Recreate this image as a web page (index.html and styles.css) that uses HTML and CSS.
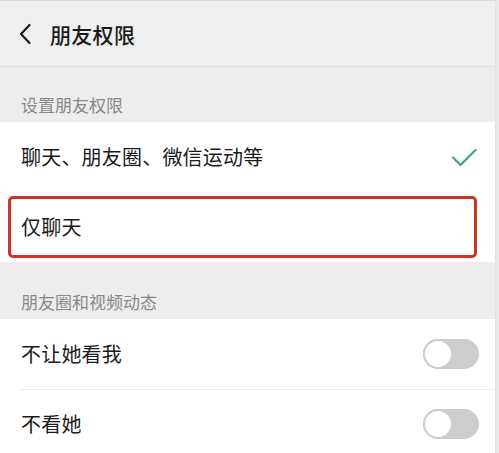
FILE: index.html
```html
<!DOCTYPE html>
<html lang="zh-CN">
<head>
<meta charset="utf-8">
<title>朋友权限</title>
<link rel="stylesheet" href="styles.css">
</head>
<body>
<div class="page">
  <header class="topbar">
    <svg class="back" width="14" height="22" viewBox="0 0 14 22"><path d="M11.5 2 L3 11 L11.5 20" fill="none" stroke="#1a1a1a" stroke-width="2.2" stroke-linecap="round" stroke-linejoin="round"/></svg>
    <span class="title">朋友权限</span>
  </header>

  <div class="section-title first">设置朋友权限</div>
  <div class="group">
    <div class="row">
      <span class="label">聊天、朋友圈、微信运动等</span>
      <svg class="check" width="26" height="19" viewBox="0 0 26 19"><path d="M2 9.5 L9.5 17 L24.5 2" fill="none" stroke="#3fa37e" stroke-width="2.2" stroke-linecap="round" stroke-linejoin="round"/></svg>
    </div>
    <div class="row highlighted">
      <span class="label">仅聊天</span>
      <span class="mark"></span>
    </div>
  </div>

  <div class="section-title">朋友圈和视频动态</div>
  <div class="group">
    <div class="row">
      <span class="label">不让她看我</span>
      <span class="switch"><span class="knob"></span></span>
    </div>
    <div class="row">
      <span class="label">不看她</span>
      <span class="switch"><span class="knob"></span></span>
    </div>
  </div>
</div>
</body>
</html>
```

FILE: styles.css
```css
html, body {
  margin: 0;
  padding: 0;
  background: #ededed;
}

body {
  font-family: "Noto Sans CJK SC", "Noto Sans", sans-serif;
  color: #1a1a1a;
}

.page {
  width: 497px;
  height: 453px;
  overflow: hidden;
  border-right: 2px solid #e2e2e2;
  border-top: 1px solid #dcdcdc;
  box-sizing: border-box;
  background: #ededed;
}

.topbar {
  height: 66px;
  display: flex;
  align-items: center;
  padding-left: 18px;
  border-bottom: 1px solid #dedede;
  background: #efefef;
  box-sizing: border-box;
}

.back {
  display: block;
  margin-right: 18px;
}

.title {
  font-size: 21px;
  line-height: 28px;
  font-weight: 500;
  letter-spacing: 0.3px;
}

.section-title {
  font-size: 17px;
  line-height: 24px;
  color: #888;
  padding: 28px 0 5px 21px;
}

.section-title.first {
  padding-top: 26px;
}

.group {
  background: #fff;
}

.row {
  position: relative;
  height: 70px;
  display: flex;
  align-items: center;
  justify-content: space-between;
  padding: 0 16px 0 21px;
  box-sizing: border-box;
}

.row + .row::before {
  content: "";
  position: absolute;
  left: 20px;
  right: 0;
  top: 0;
  border-top: 1px solid #ececec;
}

.label {
  font-size: 20px;
  line-height: 28px;
  letter-spacing: 0.2px;
}

.check {
  display: block;
  margin-right: 2px;
}

.highlighted .mark {
  position: absolute;
  left: 8px;
  top: 4px;
  width: 469px;
  height: 62px;
  border: 3px solid #cf3423;
  border-radius: 5px;
  box-sizing: border-box;
  z-index: 2;
}

.highlighted::before {
  display: none;
}

.switch {
  width: 56px;
  height: 30px;
  border-radius: 15px;
  background: #cdcdcd;
  display: flex;
  align-items: center;
  box-sizing: border-box;
}

.knob {
  width: 30px;
  height: 30px;
  border-radius: 50%;
  background: #fff;
  border: 2px solid #cdcdcd;
  box-sizing: border-box;
}
```
